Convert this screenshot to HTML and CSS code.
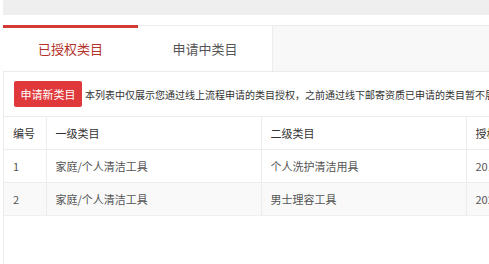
FILE: index.html
```html
<!DOCTYPE html>
<html lang="zh-CN">
<head>
    <meta charset="UTF-8">
    <meta name="viewport" content="width=device-width, initial-scale=1.0">
    <title>类目管理</title>
    <link rel="stylesheet" href="styles.css">
</head>
<body>
    <div class="topbar"></div>
    <div class="main">
        <div class="tabs">
            <div class="tab active">已授权类目</div>
            <div class="tab">申请中类目</div>
            <div class="tab-rest"></div>
        </div>
        <div class="panel">
            <div class="toolbar">
                <button class="apply">申请新类目</button>
                <span class="note">本列表中仅展示您通过线上流程申请的类目授权，之前通过线下邮寄资质已申请的类目暂不展示，如需查看请联系客服</span>
            </div>
            <table class="list">
                <thead>
                    <tr>
                        <th class="c-no">编号</th>
                        <th class="c-first">一级类目</th>
                        <th class="c-second">二级类目</th>
                        <th class="c-time">授权时间</th>
                    </tr>
                </thead>
                <tbody>
                    <tr>
                        <td>1</td>
                        <td>家庭/个人清洁工具</td>
                        <td>个人洗护清洁用具</td>
                        <td>2019-08-12 10:21:36</td>
                    </tr>
                    <tr class="alt">
                        <td>2</td>
                        <td>家庭/个人清洁工具</td>
                        <td>男士理容工具</td>
                        <td>2020-03-05 14:10:22</td>
                    </tr>
                </tbody>
            </table>
        </div>
    </div>
</body>
</html>
```

FILE: styles.css
```css
body {
    margin: 0;
    background: #fff;
    font-family: "Noto Sans CJK SC", "Noto Sans", sans-serif;
    color: #333;
    overflow: hidden;
    width: 489px;
    height: 264px;
}
.topbar {
    height: 15px;
    margin-left: 3px;
    background: #efefef;
    margin-bottom: 10px;
}
.main {
    margin-left: 3px;
}
.tabs {
    display: flex;
    height: 47px;
    box-sizing: border-box;
    border-bottom: 1px solid #ebebeb;
}
.tab {
    width: 135px;
    flex-shrink: 0;
    box-sizing: border-box;
    display: flex;
    justify-content: center;
    align-items: center;
    font-size: 13px;
    color: #555;
    background: #fff;
    border-top: 1px solid #ececec;
    border-right: 1px solid #ececec;
}
.tab.active {
    color: #b5322b;
    border-top: 3px solid #d43a35;
    border-right: none;
    padding-bottom: 2px;
}
.tab-rest {
    flex: 1;
    background: #f8f8f8;
    border-top: 1px solid #ececec;
}
.panel {
    border-left: 1px solid #ececec;
    height: 192px;
    overflow: hidden;
}
.toolbar {
    display: flex;
    align-items: center;
    padding: 9px 0 9px 10px;
    white-space: nowrap;
}
.apply {
    width: 68px;
    height: 26px;
    flex-shrink: 0;
    border: none;
    border-radius: 2px;
    background: #e0393b;
    color: #fff;
    font-family: inherit;
    font-size: 11px;
    padding: 0;
}
.note {
    margin-left: 3px;
    font-size: 10px;
    color: #333;
}
.list {
    border-collapse: collapse;
    table-layout: fixed;
    width: 700px;
    font-size: 11px;
}
.list th, .list td {
    height: 33px;
    box-sizing: border-box;
    padding: 0 9px;
    text-align: left;
    font-weight: normal;
    border-top: 1px solid #ececec;
    border-right: 1px solid #ececec;
    white-space: nowrap;
    overflow: hidden;
}
.list th {
    color: #333;
}
.list td {
    color: #555;
}
.c-no { width: 42px; }
.c-first { width: 215px; }
.c-second { width: 205px; }
.c-time { width: 238px; }
.list tbody tr:last-child td {
    border-bottom: 1px solid #f0f0f0;
}
.alt td {
    background: #f9f9f9;
}
```
